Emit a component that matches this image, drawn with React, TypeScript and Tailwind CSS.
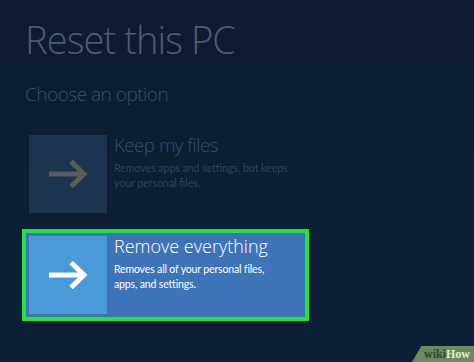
import React from 'react';

const Arrow: React.FC<{ color: string }> = ({ color }) => (
  <svg width="40" height="30" viewBox="0 0 40 30" fill="none">
    <path d="M1 15 H36 M23 2.5 L36 15 L23 27.5" stroke={color} strokeWidth="5" strokeLinejoin="miter" />
  </svg>
);

const App: React.FC = () => {
  return (
    <div
      className="relative w-[474px] h-[362px] overflow-hidden bg-gradient-to-b from-[#0c1b31] to-[#0e2039]"
      style={{ fontFamily: '"Open Sans", "Noto Sans", sans-serif' }}
    >
      <div className="pl-[25px] pt-[16px]">
        <h1 className="text-[38px] font-light leading-[46px] tracking-[-0.9px] text-[#4c5c70] whitespace-nowrap">Reset this PC</h1>
        <p className="mt-[20px] text-[19px] font-light leading-[24px] tracking-[-0.5px] text-[#3d5169] whitespace-nowrap">Choose an option</p>
      </div>

      {/* Keep my files */}
      <div className="ml-[26px] mt-[26px] w-[278px] flex gap-[7px] p-[3px]">
        <div className="w-[78px] h-[78px] shrink-0 bg-[#1b3450] flex items-center justify-center">
          <Arrow color="#5c5b57" />
        </div>
        <div>
          <div className="text-[18.5px] font-light leading-[22px] tracking-[-0.4px] text-[#3a4d63] -mt-[1px] whitespace-nowrap">Keep my files</div>
          <div
            className="mt-[5px] text-[10.5px] leading-[15px] text-[#31455b] whitespace-nowrap"
            style={{ fontFamily: 'Lato, "Open Sans", sans-serif' }}
          >
            Removes apps and settings, but keeps
            <br />
            your personal files.
          </div>
        </div>
      </div>

      {/* Remove everything */}
      <div className="ml-[22px] mt-[13px] w-[287px] border-[4px] border-[#22e43a]">
        <div className="flex gap-[7px] p-[3px] bg-[#3d74b7]">
          <div className="w-[78px] h-[78px] shrink-0 bg-[#4a9ad7] flex items-center justify-center">
            <Arrow color="#ffffff" />
          </div>
          <div>
            <div className="text-[18px] font-light leading-[22px] text-white -mt-[1px] whitespace-nowrap">Remove everything</div>
            <div
              className="mt-[5px] text-[10.5px] leading-[15px] tracking-[-0.15px] text-white whitespace-nowrap"
              style={{ fontFamily: 'Lato, "Open Sans", sans-serif' }}
            >
              Removes all of your personal files,
              <br />
              apps, and settings.
            </div>
          </div>
        </div>
      </div>

      {/* wikiHow badge */}
      <div className="absolute right-0 bottom-0 h-[16px] w-[62px] bg-[#6b8a60] [clip-path:polygon(15%_0,100%_0,100%_100%,0_100%)] flex items-center justify-end pr-[4px]">
        <span
          className="text-[12px] font-bold leading-none"
          style={{ fontFamily: '"Liberation Serif", "DejaVu Serif", serif' }}
        >
          <span className="text-[#33432f]">wiki</span>
          <span className="text-[#e2ead9]">How</span>
        </span>
      </div>
    </div>
  );
};

export default App;
